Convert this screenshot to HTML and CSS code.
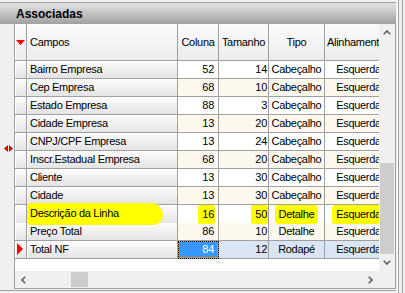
FILE: index.html
```html
<!DOCTYPE html>
<html lang="pt-BR">
<head>
    <meta charset="UTF-8">
    <title>Associadas</title>
    <link rel="stylesheet" href="styles.css">
</head>
<body>

    <div class="window">
        <div class="panel">
            <div class="titlebar">Associadas</div>
            <div class="content">
                <div class="gutter">
                    <svg class="splitter" width="9" height="7" viewBox="0 0 9 7">
                        <polygon points="0,3.5 4,0 4,7" fill="#e00000"/>
                        <polygon points="5,0 9,3.5 5,7" fill="#e00000"/>
                    </svg>
                </div>
                <div class="grid">
                    <div class="main">
                        <div class="table" id="camposGrid">
                            <div class="row head">
                                <div class="cell ind">
                                    <svg class="sort" width="9" height="5" viewBox="0 0 9 5"><polygon points="0,0 9,0 4.5,5" fill="#ff0000"/></svg>
                                </div>
                                <div class="cell campo">Campos</div>
                                <div class="cell center">Coluna</div>
                                <div class="cell center">Tamanho</div>
                                <div class="cell center">Tipo</div>
                                <div class="cell left">Alinhamento</div>
                            </div>
                            <div class="rows"></div>
                        </div>
                        <div class="vscroll">
                            <div class="arrow">
                                <svg width="8" height="5" viewBox="0 0 8 5"><polyline points="0.7,4.3 4,1 7.3,4.3" fill="none" stroke="#606060" stroke-width="1.6"/></svg>
                            </div>
                            <div class="track"><div class="thumb"></div></div>
                            <div class="arrow">
                                <svg width="8" height="5" viewBox="0 0 8 5"><polyline points="0.7,0.7 4,4 7.3,0.7" fill="none" stroke="#606060" stroke-width="1.6"/></svg>
                            </div>
                        </div>
                    </div>
                    <div class="hbar">
                        <div class="hscroll">
                            <div class="harrow">
                                <svg width="5" height="8" viewBox="0 0 5 8"><polyline points="4.3,0.7 1,4 4.3,7.3" fill="none" stroke="#606060" stroke-width="1.6"/></svg>
                            </div>
                            <div class="htrack"><div class="hthumb"></div></div>
                            <div class="harrow">
                                <svg width="5" height="8" viewBox="0 0 5 8"><polyline points="0.7,0.7 4,4 0.7,7.3" fill="none" stroke="#606060" stroke-width="1.6"/></svg>
                            </div>
                        </div>
                        <div class="corner"></div>
                    </div>
                </div>
            </div>
            <div class="bottomline"></div>
        </div>
        <div class="rframe"></div>
    </div>

    <script>
        const campos = [
            { nome: "Bairro Empresa", coluna: 52, tamanho: 14, tipo: "Cabeçalho" },
            { nome: "Cep Empresa", coluna: 68, tamanho: 10, tipo: "Cabeçalho" },
            { nome: "Estado Empresa", coluna: 88, tamanho: 3, tipo: "Cabeçalho" },
            { nome: "Cidade Empresa", coluna: 13, tamanho: 20, tipo: "Cabeçalho" },
            { nome: "CNPJ/CPF Empresa", coluna: 13, tamanho: 24, tipo: "Cabeçalho" },
            { nome: "Inscr.Estadual Empresa", coluna: 68, tamanho: 20, tipo: "Cabeçalho" },
            { nome: "Cliente", coluna: 13, tamanho: 30, tipo: "Cabeçalho" },
            { nome: "Cidade", coluna: 13, tamanho: 30, tipo: "Cabeçalho" },
            { nome: "Descrição da Linha", coluna: 16, tamanho: 50, tipo: "Detalhe", marcado: true },
            { nome: "Preço Total", coluna: 86, tamanho: 10, tipo: "Detalhe" },
            { nome: "Total NF", coluna: 84, tamanho: 12, tipo: "Rodapé", atual: true }
        ];

        const rows = document.querySelector("#camposGrid .rows");

        // marker highlight drawn over some of the texts
        function mark(text, campo, kind) {
            return campo.marcado ? `<span class="mark ${kind}">${text}</span>` : text;
        }

        campos.forEach((campo, i) => {
            const row = document.createElement("div");
            row.className = "row " + (campo.atual ? "current" : (i % 2 ? "odd" : "even"));

            const seta = campo.atual
                ? '<svg class="pointer" width="6" height="12" viewBox="0 0 6 12"><polygon points="0,0 6,6 0,12" fill="#ff0000"/></svg>'
                : "";

            row.innerHTML = `
                <div class="cell ind">${seta}</div>
                <div class="cell campo">${mark(campo.nome, campo, "wide")}</div>
                <div class="cell num col ${campo.atual ? "sel" : ""}">${mark(campo.coluna, campo, "small")}</div>
                <div class="cell num tam">${mark(campo.tamanho, campo, "small")}</div>
                <div class="cell center">${mark(campo.tipo, campo, "word")}</div>
                <div class="cell center">${mark("Esquerda", campo, "word")}</div>
            `;

            rows.appendChild(row);
        });
    </script>

</body>
</html>
```

FILE: styles.css
```css
body {
    margin: 0;
    background-color: #f0f0f0;
    font-family: "Liberation Sans", Arial, sans-serif;
    font-size: 11px;
    letter-spacing: -0.3px;
    color: #000;
}
.window {
    display: flex;
    width: 405px;
    height: 293px;
    overflow: hidden;
}
.panel {
    width: 396px;
    margin-top: 2px;
    border-top: 1px solid #a0a0a0;
}
.titlebar {
    height: 21px;
    line-height: 22px;
    padding-left: 16px;
    font-size: 12px;
    font-weight: bold;
    letter-spacing: 0;
    background: linear-gradient(#e4e4e4, #c2c2c2 50%, #a0a0a0);
}
.content {
    display: flex;
}
.gutter {
    width: 14px;
    padding-top: 121px;
    box-sizing: border-box;
}
.splitter {
    display: block;
    margin-left: 4px;
}
.grid {
    width: 382px;
    border: 1px solid #a0a0a0;
    border-top: none;
    box-sizing: border-box;
}
.main {
    display: flex;
    height: 247px;
}
.table {
    width: 364px;
    overflow: hidden;
    background-color: #fff;
}

/* rows and cells */
.row {
    display: grid;
    grid-template-columns: 12px 151px 41px 50px 56px 68px;
    height: 18px;
}
.row.head {
    height: 37px;
}
.cell {
    box-sizing: border-box;
    border-right: 1px solid #a0a0a0;
    border-bottom: 1px solid #a0a0a0;
    line-height: 17px;
    white-space: nowrap;
}
.head .cell {
    line-height: 36px;
    background: linear-gradient(#fbfbfb, #ececec);
}
.ind, .campo {
    background: linear-gradient(#fcfcfc, #e4e4e4);
    box-shadow: inset 1px 1px #fff;
}
.campo { padding-left: 3px; }
.center { text-align: center; }
.left { padding-left: 2px; }
.num { text-align: right; }
.col { padding-right: 4px; }
.tam { padding-right: 1px; }
.odd .num, .odd .center { background-color: #fcf8ee; }
.current .num, .current .center { background-color: #d9e5f3; }
.sort {
    display: block;
    margin: 16px 0 0 1px;
}
.pointer {
    display: block;
    margin: 2px 0 0 2px;
}
.cell.sel {
    background-color: #3399ff;
    color: #fff;
    box-shadow: inset 0 0 0 1px #e0893a;
    outline: 1px dotted #000;
    outline-offset: -1px;
}

/* yellow marker */
.mark {
    position: relative;
    display: inline-block;
    background-color: #ffff00;
}
.mark.wide {
    margin: -2px 0 0 -3px;
    padding: 2px 44px 3px 3px;
    border-radius: 3px 12px 10px 4px;
}
.mark.small {
    margin-right: -1px;
    padding: 1px 1px 1px 4px;
    border-radius: 2px;
}
.mark.word {
    padding: 1px 4px;
    border-radius: 3px;
}

/* scrollbars */
.vscroll {
    width: 16px;
    display: flex;
    flex-direction: column;
    background-color: #f0f0f0;
}
.arrow {
    height: 17px;
    display: flex;
    align-items: center;
    justify-content: center;
}
.track {
    flex: 1;
}
.thumb {
    margin: 122px 1px 0 1px;
    height: 91px;
    background-color: #cdcdcd;
}
.hbar {
    display: flex;
    height: 17px;
}
.hscroll {
    width: 364px;
    display: flex;
    background-color: #f0f0f0;
}
.harrow {
    width: 17px;
    display: flex;
    align-items: center;
    justify-content: center;
}
.htrack {
    flex: 1;
}
.hthumb {
    margin: 1px 0 0 39px;
    width: 17px;
    height: 15px;
    background-color: #cdcdcd;
}
.corner {
    width: 16px;
    background-color: #f0f0f0;
}
.bottomline {
    height: 1px;
    margin-top: 1px;
    background-color: #a0a0a0;
}
.rframe {
    width: 9px;
    background: linear-gradient(90deg, #f0f0f0 0 1px, #fff 1px 2px, #a0a0a0 2px 3px, #f0f0f0 3px 6px, #a0a0a0 6px 7px, #f0f0f0 7px);
}
```
